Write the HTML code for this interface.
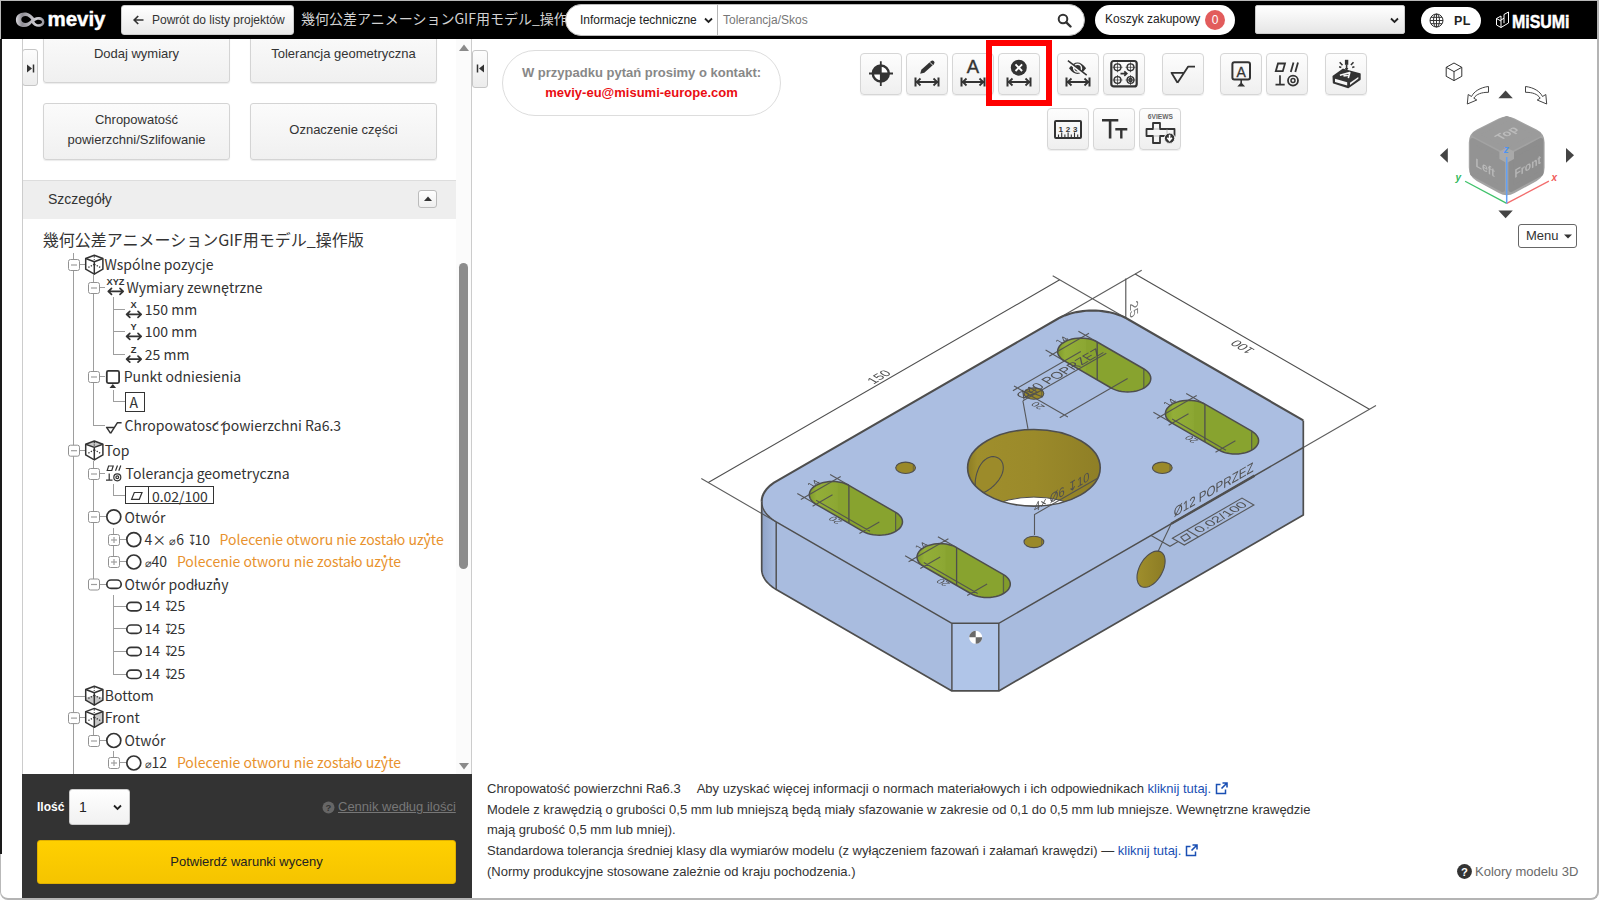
<!DOCTYPE html>
<html lang="pl">
<head>
<meta charset="utf-8">
<title>meviy</title>
<style>
*{box-sizing:border-box;margin:0;padding:0}
html,body{width:1600px;height:900px;overflow:hidden;background:#fff}
body{font-family:"Liberation Sans","Noto Sans CJK JP",sans-serif;font-size:12px;color:#333;position:relative}
.abs{position:absolute}
#frame{position:absolute;left:0;top:0;width:1599px;height:900px;border:1px solid #b9b9b9;border-right:2px solid #b4b4b4;border-bottom:2px solid #b4b4b4;border-radius:0 0 8px 8px;pointer-events:none;z-index:50}
#leftedge{position:absolute;left:0;top:39px;width:2px;height:815px;background:#1a1a1a;z-index:51}
/* header */
#hdr{position:absolute;left:1px;top:1px;width:1596px;height:38px;background:#000}
#logo{position:absolute;left:14px;top:7px;width:95px;height:26px}
#back{position:absolute;left:120px;top:4px;width:173px;height:30px;border:1px solid #ccc;border-radius:3px;background:linear-gradient(#fff,#e9e9e9);color:#333;font-size:12px;line-height:28px;white-space:nowrap}
#ptitle{position:absolute;left:300px;top:5px;width:265px;height:26px;overflow:hidden;white-space:nowrap;color:#d2d2d2;font-size:14px;line-height:25px;font-family:"Noto Sans CJK JP",sans-serif}
#search{position:absolute;left:564px;top:3px;width:520px;height:32px;border-radius:16px;background:#fff;border:1px solid #bbb}
#cart{position:absolute;left:1094px;top:4px;width:140px;height:30px;border-radius:15px;background:#fff;color:#222;font-size:12px;line-height:28px}
#usersel{position:absolute;left:1254px;top:4px;width:150px;height:29px;border-radius:2px;background:linear-gradient(#fff,#e6e6e6);border:1px solid #ccc}
#lang{position:absolute;left:1420px;top:6px;width:60px;height:27px;border-radius:14px;background:#fff}
#misumi{position:absolute;left:1494px;top:8px;width:80px;height:24px}
/* left panel */
#lp{position:absolute;left:22px;top:39px;width:450px;height:859px;border-left:1px solid #ccc;border-right:1px solid #ccc;background:#fff;overflow:hidden}
.gbtn{position:absolute;border:1px solid #d4d4d4;border-radius:3px;background:linear-gradient(#fbfbfb,#f0f0f0);box-shadow:0 1px 1px rgba(0,0,0,.08);color:#333;font-size:13px;text-align:center}
#tree{font-family:"Noto Sans CJK JP",sans-serif;color:#333}
</style>
</head>
<body>
<div id="hdr">
<svg id="logo" viewBox="0 0 95 26">
<defs><linearGradient id="lg1" x1="0" y1="0" x2="1" y2="0"><stop offset="0" stop-color="#d9d8dd"/><stop offset=".22" stop-color="#8e8c94"/><stop offset=".5" stop-color="#b9b8be"/><stop offset=".75" stop-color="#d0cfd4"/><stop offset="1" stop-color="#8f8d95"/></linearGradient></defs>
<g transform="translate(-15,-8)"><path fill-rule="evenodd" fill="url(#lg1)" d="M15.900 20C15.900 15.500 19.500 12.600 24.500 12.600C29 12.600 31.800 15.200 34 18C35.500 17.300 37 17.100 38.500 17.100C42 17.100 44.400 19.200 44.400 22C44.400 24.800 42 26.800 38.500 26.800C35.500 26.800 33.300 25 31.700 23C29.800 25.400 27.500 27 24 27C19.500 27 15.900 24.500 15.900 20ZM21.300 19.500C21.300 21.800 23.300 23 25.500 23C27.800 23 29.700 21.700 31.300 19.800C30 17.800 28 16 25.500 16C23.200 16 21.300 17.300 21.300 19.500ZM34.300 21.400C35.300 23 36.600 24.300 38.600 24.300C40.600 24.300 42 23.400 42 22.100C42 20.700 40.600 19.800 38.600 19.800C37 19.800 35.500 20.500 34.300 21.400Z"/></g>
<text x="32.500" y="17.700" font-family="Liberation Sans, sans-serif" font-weight="bold" font-size="20.500" fill="#fff" stroke="#fff" stroke-width=".45" textLength="58" lengthAdjust="spacingAndGlyphs">meviy</text>
</svg>
<div id="back"><svg style="position:absolute;left:11px;top:9px" width="11" height="10" viewBox="0 0 11 10"><path d="M10.500 5H1.500M5.200 1L1.200 5l4 4" fill="none" stroke="#333" stroke-width="1.700"/></svg><span style="position:absolute;left:30px;top:0">Powrót do listy projektów</span></div>
<div id="ptitle">幾何公差アニメーションGIF用モデル_操作版</div>
<div id="search">
<span style="position:absolute;left:14px;top:0;line-height:30px;font-size:12px;color:#222">Informacje techniczne</span>
<svg style="position:absolute;left:138px;top:12px" width="9" height="7" viewBox="0 0 9 7"><path d="M1 1.500l3.500 3.500L8 1.500" fill="none" stroke="#222" stroke-width="1.800"/></svg>
<div style="position:absolute;left:151px;top:0;width:1px;height:30px;background:#b5b5b5"></div>
<span style="position:absolute;left:157px;top:0;line-height:30px;font-size:12px;color:#777">Tolerancja/Skos</span>
<svg style="position:absolute;left:491px;top:8px" width="15" height="15" viewBox="0 0 15 15"><circle cx="6" cy="6" r="4.300" fill="none" stroke="#333" stroke-width="2"/><path d="M9.300 9.300L13.500 13.500" stroke="#333" stroke-width="2.400" stroke-linecap="round"/></svg>
</div>
<div id="cart"><span style="position:absolute;left:10px;top:0">Koszyk zakupowy</span><span style="position:absolute;left:110px;top:5px;width:20px;height:20px;border-radius:10px;background:#e25c5c;color:#fff;text-align:center;line-height:20px;font-size:12px">0</span></div>
<div id="usersel"><svg style="position:absolute;left:134px;top:11px" width="9" height="7" viewBox="0 0 9 7"><path d="M1 1.500l3.500 3.500L8 1.500" fill="none" stroke="#222" stroke-width="1.800"/></svg></div>
<div id="lang"><svg style="position:absolute;left:8px;top:6px" width="15" height="15" viewBox="0 0 15 15"><g fill="none" stroke="#333" stroke-width="1"><circle cx="7.500" cy="7.500" r="6.500"/><ellipse cx="7.500" cy="7.500" rx="3" ry="6.500"/><path d="M7.500 1v13M1 7.500h13M2 4.300h11M2 10.700h11"/></g></svg><span style="position:absolute;left:33px;top:0;line-height:28px;font-weight:bold;font-size:12.500px;color:#222;letter-spacing:.3px">PL</span></div>
<svg id="misumi" viewBox="0 0 80 24">
<g fill="none" stroke="#fff" stroke-width="1"><path d="M1.500 9.500l4.500-2.500v4l3-1.800V5.500l4.500-2.500v11l-7.500 4.500-4.500-2.500zM6 11v7.500M1.500 9.500L6 12M9 9.200v5"/></g>
<text x="17" y="19" font-family="Liberation Sans, sans-serif" font-weight="bold" font-size="17.500" fill="#fff" stroke="#fff" stroke-width=".5" textLength="57.500" lengthAdjust="spacingAndGlyphs">MiSUMi</text>
</svg>
</div>
<div id="lp">
<div class="abs" style="left:-1px;top:10px;width:16px;height:37px;border:1px solid #c6c6c6;border-radius:3px;background:linear-gradient(#fdfdfd,#ececec)"><svg class="abs" style="left:4px;top:14px" width="8" height="9" viewBox="0 0 8 9"><path d="M0 0.500L5 4.500L0 8.500Z" fill="#333"/><path d="M6.500 0.500V8.500" stroke="#333" stroke-width="1.500"/></svg></div>
<div class="gbtn" style="left:20px;top:-10px;width:187px;height:54px;line-height:47px">Dodaj wymiary</div>
<div class="gbtn" style="left:227px;top:-10px;width:187px;height:54px;line-height:47px">Tolerancja geometryczna</div>
<div class="gbtn" style="left:20px;top:64px;width:187px;height:57px;line-height:20px;padding-top:6px">Chropowatość<br>powierzchni/Szlifowanie</div>
<div class="gbtn" style="left:227px;top:64px;width:187px;height:57px;line-height:52px">Oznaczenie części</div>
<div class="abs" style="left:0;top:141px;width:433px;height:39px;background:#eee;border-top:1px solid #ddd"><span class="abs" style="left:25px;top:0;line-height:37px;font-size:14px;color:#333">Szczegóły</span>
<div class="abs" style="left:395px;top:9px;width:19px;height:18px;border:1px solid #bbb;border-radius:3px;background:linear-gradient(#fff,#eee)"><svg class="abs" style="left:5px;top:5px" width="8" height="5" viewBox="0 0 8 5"><path d="M0 5L4 0.500L8 5Z" fill="#333"/></svg></div></div>
<div class="abs" style="left:433px;top:0;width:15px;height:735px;background:#fbfbfb"></div>
<svg class="abs" style="left:436px;top:5px" width="10" height="7" viewBox="0 0 10 7"><path d="M0 7L5 0.500L10 7Z" fill="#8a8a8a"/></svg>
<svg class="abs" style="left:436px;top:724px" width="10" height="7" viewBox="0 0 10 7"><path d="M0 0L5 6.500L10 0Z" fill="#8a8a8a"/></svg>
<div class="abs" style="left:436px;top:224px;width:9px;height:306px;border-radius:5px;background:#8c8c8c"></div>
</div>
<svg id="tree" class="abs" style="left:23px;top:219px" width="433" height="555" viewBox="23 219 433 555" font-family="Noto Sans CJK JP, sans-serif" font-size="14">
<text x="42.800" y="245.800" font-size="16" fill="#333">幾何公差アニメーションGIF用モデル_操作版</text>
<path d="M73.5 253V774" stroke="#9e9e9e"/>
<path d="M93.5 275V426" stroke="#9e9e9e"/>
<path d="M93.5 461V590" stroke="#9e9e9e"/>
<path d="M93.5 728V746" stroke="#9e9e9e"/>
<path d="M80 264.5H85" stroke="#9e9e9e"/>
<rect x="68.5" y="259.5" width="11" height="11" rx="2" fill="#fff" stroke="#929292"/><path d="M71 265h6" stroke="#9e9e9e" stroke-width="1.2"/>
<g transform="translate(84.7,254.7)" fill="none" stroke="#333" stroke-width="1.5" stroke-linejoin="round"><path d="M9.600 0.600L18.200 3.800V14.500L9.600 19.500L1 14.500V3.800Z"/><path d="M1 3.800L9.600 7L18.200 3.800M9.600 7V19.500"/><path d="M9.600 9.500L2.500 13.300M9.600 9.500L16.700 13.300M9.600 1.500V5" stroke-width="1.300" stroke-dasharray="1.300 1.400"/></g>
<text x="104.4" y="270" fill="#333" >Wspólne pozycje</text>
<rect x="88.5" y="282.5" width="11" height="11" rx="2" fill="#fff" stroke="#929292"/><path d="M91 288h6" stroke="#9e9e9e" stroke-width="1.2"/>
<path d="M100 287.5H105" stroke="#9e9e9e"/>
<text x="106.500" y="285" font-family="Liberation Sans, sans-serif" font-weight="bold" font-size="8.500" fill="#333" textLength="18" lengthAdjust="spacingAndGlyphs">XYZ</text>
<path d="M108.5 291.3H123.0M111.5 288.3L108.3 291.3L111.5 294.3M120.0 288.3L123.2 291.3L120.0 294.3" fill="none" stroke="#333" stroke-width="1.700" stroke-linejoin="round" stroke-linecap="round"/>
<text x="126.5" y="292.6" fill="#333" >Wymiary zewnętrzne</text>
<path d="M113.5 297V354.5" stroke="#9e9e9e"/>
<path d="M113 309.5H125" stroke="#9e9e9e"/>
<text x="133.700" y="308.2" text-anchor="middle" font-family="Liberation Sans, sans-serif" font-weight="bold" font-size="9.300" fill="#333">X</text>
<path d="M126.8 314.3H141.0M129.8 311.3L126.6 314.3L129.8 317.3M138.0 311.3L141.2 314.3L138.0 317.3" fill="none" stroke="#333" stroke-width="1.700" stroke-linejoin="round" stroke-linecap="round"/>
<text x="144.8" y="314.7" fill="#333" >150 mm</text>
<path d="M113 331.5H125" stroke="#9e9e9e"/>
<text x="133.700" y="330.3" text-anchor="middle" font-family="Liberation Sans, sans-serif" font-weight="bold" font-size="9.300" fill="#333">Y</text>
<path d="M126.8 336.40000000000003H141.0M129.8 333.40000000000003L126.6 336.40000000000003L129.8 339.40000000000003M138.0 333.40000000000003L141.2 336.40000000000003L138.0 339.40000000000003" fill="none" stroke="#333" stroke-width="1.700" stroke-linejoin="round" stroke-linecap="round"/>
<text x="144.8" y="336.8" fill="#333" >100 mm</text>
<path d="M113 354.5H125" stroke="#9e9e9e"/>
<text x="133.700" y="353.0" text-anchor="middle" font-family="Liberation Sans, sans-serif" font-weight="bold" font-size="9.300" fill="#333">Z</text>
<path d="M126.8 359.1H141.0M129.8 356.1L126.6 359.1L129.8 362.1M138.0 356.1L141.2 359.1L138.0 362.1" fill="none" stroke="#333" stroke-width="1.700" stroke-linejoin="round" stroke-linecap="round"/>
<text x="144.8" y="359.5" fill="#333" >25 mm</text>
<rect x="88.5" y="371.5" width="11" height="11" rx="2" fill="#fff" stroke="#929292"/><path d="M91 377h6" stroke="#9e9e9e" stroke-width="1.2"/>
<path d="M100 376.5H105" stroke="#9e9e9e"/>
<rect x="106.800" y="370.900" width="12.300" height="12.200" rx="1.500" fill="none" stroke="#333" stroke-width="1.800"/><path d="M109.500 388L112.800 384L116.100 388Z" fill="#333"/>
<text x="123.7" y="381.5" fill="#333" >Punkt odniesienia</text>
<path d="M113.5 390V402" stroke="#9e9e9e"/>
<path d="M113 401.5H125" stroke="#9e9e9e"/>
<rect x="125.500" y="392.500" width="19" height="19" fill="#fff" stroke="#333"/>
<text x="129.5" y="407.7" fill="#333" >A</text>
<path d="M93 425.5H105" stroke="#9e9e9e"/>
<path d="M110.600 433.300L106.600 427.400H114.300M110.600 433.300L117.300 422.800H121.600" fill="none" stroke="#333" stroke-width="1.500" stroke-linejoin="round"/>
<text x="124.6" y="431" fill="#333" >Chropowatość powierzchni Ra6.3</text>
<path d="M80 450.5H85" stroke="#9e9e9e"/>
<rect x="68.5" y="445.2" width="11" height="11" rx="2" fill="#fff" stroke="#929292"/><path d="M71 450.7h6" stroke="#9e9e9e" stroke-width="1.2"/>
<g transform="translate(84.7,440.4)" fill="none" stroke="#333" stroke-width="1.5" stroke-linejoin="round"><path d="M9.600 0.600L18.200 3.800L9.600 7L1 3.800Z" fill="#c8c8c8" stroke="none"/><path d="M9.600 0.600L18.200 3.800V14.500L9.600 19.500L1 14.500V3.800Z"/><path d="M1 3.800L9.600 7L18.200 3.800M9.600 7V19.500"/><path d="M9.600 9.500L2.500 13.300M9.600 9.500L16.700 13.300M9.600 1.500V5" stroke-width="1.300" stroke-dasharray="1.300 1.400"/></g>
<text x="104.8" y="455.7" fill="#333" >Top</text>
<rect x="88.5" y="468.5" width="11" height="11" rx="2" fill="#fff" stroke="#929292"/><path d="M91 474h6" stroke="#9e9e9e" stroke-width="1.2"/>
<path d="M100 473.5H105" stroke="#9e9e9e"/>
<g fill="none" stroke="#333" stroke-width="1.200"><path d="M108.600 466H113.200L111.800 470.500H107.200Z"/><path d="M117.500 465.500L115.500 470.800M120.800 465.500L118.800 470.800"/><path d="M109.200 473.500V480M106 480.200H112.500"/><circle cx="117.300" cy="477.300" r="3.500"/><circle cx="117.300" cy="477.300" r="1.400"/></g>
<text x="125.6" y="479" fill="#333" >Tolerancja geometryczna</text>
<path d="M113.5 484V496" stroke="#9e9e9e"/>
<path d="M113 495.5H125" stroke="#9e9e9e"/>
<rect x="125.500" y="486.500" width="88" height="17" fill="#fff" stroke="#333"/><path d="M148.500 486.500V503.500" stroke="#333"/>
<path d="M134.300 492.500H142L139.300 499.300H131.600Z" fill="none" stroke="#333" stroke-width="1.200"/>
<text x="151.9" y="501.5" fill="#333" >0.02/100</text>
<rect x="88.5" y="511.5" width="11" height="11" rx="2" fill="#fff" stroke="#929292"/><path d="M91 517h6" stroke="#9e9e9e" stroke-width="1.2"/>
<path d="M100 516.5H106" stroke="#9e9e9e"/>
<circle cx="113.8" cy="516.8" r="7" fill="none" stroke="#333" stroke-width="1.700"/>
<text x="124.6" y="522.7" fill="#333" >Otwór</text>
<path d="M113.5 528V561.5" stroke="#9e9e9e"/>
<rect x="108.5" y="534.5" width="11" height="11" rx="2" fill="#fff" stroke="#929292"/><path d="M111 540h6" stroke="#9e9e9e" stroke-width="1.2"/><path d="M114 537v6" stroke="#9e9e9e" stroke-width="1.2"/>
<path d="M120 539.5H126" stroke="#9e9e9e"/>
<circle cx="133.8" cy="539.6" r="7" fill="none" stroke="#333" stroke-width="1.700"/>
<text x="144.400" y="544.7" fill="#333">4× <tspan font-size="10.500">⌀</tspan>6</text>
<text transform="translate(187.8,544.7) scale(.72,1)" fill="#333">↧</text>
<text x="194.5" y="544.7" fill="#333" >10</text>
<text x="219.6" y="544.7" fill="#e8922d" >Polecenie otworu nie zostało użyte</text>
<rect x="108.5" y="556.5" width="11" height="11" rx="2" fill="#fff" stroke="#929292"/><path d="M111 562h6" stroke="#9e9e9e" stroke-width="1.2"/><path d="M114 559v6" stroke="#9e9e9e" stroke-width="1.2"/>
<path d="M120 561.5H126" stroke="#9e9e9e"/>
<circle cx="133.8" cy="562" r="7" fill="none" stroke="#333" stroke-width="1.700"/>
<text x="144.600" y="567.3" fill="#333"><tspan font-size="10.500">⌀</tspan>40</text>
<text x="176.9" y="567.3" fill="#e8922d" >Polecenie otworu nie zostało użyte</text>
<rect x="88.5" y="579.0" width="11" height="11" rx="2" fill="#fff" stroke="#929292"/><path d="M91 584.5h6" stroke="#9e9e9e" stroke-width="1.2"/>
<path d="M100 584.5H106" stroke="#9e9e9e"/>
<rect x="106.8" y="580.0" width="14.400" height="8.400" rx="4.200" fill="none" stroke="#333" stroke-width="1.700"/>
<text x="124.6" y="589.5" fill="#333" >Otwór podłużny</text>
<path d="M113.5 595V674" stroke="#9e9e9e"/>
<path d="M113 606.5H126" stroke="#9e9e9e"/>
<rect x="126.8" y="602.4" width="14.400" height="8.400" rx="4.200" fill="none" stroke="#333" stroke-width="1.700"/>
<text x="144.4" y="611.4" fill="#333" >14</text>
<text transform="translate(164,611.4) scale(.72,1)" fill="#333">↧</text>
<text x="169.7" y="611.4" fill="#333" >25</text>
<path d="M113 628.5H126" stroke="#9e9e9e"/>
<rect x="126.8" y="625.0" width="14.400" height="8.400" rx="4.200" fill="none" stroke="#333" stroke-width="1.700"/>
<text x="144.4" y="634" fill="#333" >14</text>
<text transform="translate(164,634) scale(.72,1)" fill="#333">↧</text>
<text x="169.7" y="634" fill="#333" >25</text>
<path d="M113 651.5H126" stroke="#9e9e9e"/>
<rect x="126.8" y="647.3" width="14.400" height="8.400" rx="4.200" fill="none" stroke="#333" stroke-width="1.700"/>
<text x="144.4" y="656.3" fill="#333" >14</text>
<text transform="translate(164,656.3) scale(.72,1)" fill="#333">↧</text>
<text x="169.7" y="656.3" fill="#333" >25</text>
<path d="M113 674.5H126" stroke="#9e9e9e"/>
<rect x="126.8" y="670.1" width="14.400" height="8.400" rx="4.200" fill="none" stroke="#333" stroke-width="1.700"/>
<text x="144.4" y="679.1" fill="#333" >14</text>
<text transform="translate(164,679.1) scale(.72,1)" fill="#333">↧</text>
<text x="169.7" y="679.1" fill="#333" >25</text>
<path d="M73 696.5H85" stroke="#9e9e9e"/>
<g transform="translate(84.7,685.7)" fill="none" stroke="#333" stroke-width="1.5" stroke-linejoin="round"><path d="M1 12L9.600 9.500L18.200 12L18.200 14.500L9.600 19.500L1 14.500Z" fill="#c8c8c8" stroke="none"/><path d="M9.600 0.600L18.200 3.800V14.500L9.600 19.500L1 14.500V3.800Z"/><path d="M1 3.800L9.600 7L18.200 3.800M9.600 7V19.500"/><path d="M9.600 9.500L2.500 13.300M9.600 9.500L16.700 13.300M9.600 1.500V5" stroke-width="1.300" stroke-dasharray="1.300 1.400"/></g>
<text x="104.8" y="701" fill="#333" >Bottom</text>
<path d="M80 717.5H85" stroke="#9e9e9e"/>
<rect x="68.5" y="712.6" width="11" height="11" rx="2" fill="#fff" stroke="#929292"/><path d="M71 718.1h6" stroke="#9e9e9e" stroke-width="1.2"/>
<g transform="translate(84.7,707.8000000000001)" fill="none" stroke="#333" stroke-width="1.5" stroke-linejoin="round"><path d="M9.600 7L18.200 3.800V14.500L9.600 19.500Z" fill="#c8c8c8" stroke="none"/><path d="M9.600 0.600L18.200 3.800V14.500L9.600 19.500L1 14.500V3.800Z"/><path d="M1 3.800L9.600 7L18.200 3.800M9.600 7V19.500"/><path d="M9.600 9.500L2.500 13.300M9.600 9.500L16.700 13.300M9.600 1.500V5" stroke-width="1.300" stroke-dasharray="1.300 1.400"/></g>
<text x="104.8" y="723.1" fill="#333" >Front</text>
<rect x="88.5" y="735.5" width="11" height="11" rx="2" fill="#fff" stroke="#929292"/><path d="M91 741h6" stroke="#9e9e9e" stroke-width="1.2"/>
<path d="M100 740.5H106" stroke="#9e9e9e"/>
<circle cx="113.8" cy="740.5" r="7" fill="none" stroke="#333" stroke-width="1.700"/>
<text x="124.6" y="745.8" fill="#333" >Otwór</text>
<path d="M113.5 751V758" stroke="#9e9e9e"/>
<rect x="108.5" y="757.5" width="11" height="11" rx="2" fill="#fff" stroke="#929292"/><path d="M111 763h6" stroke="#9e9e9e" stroke-width="1.2"/><path d="M114 760v6" stroke="#9e9e9e" stroke-width="1.2"/>
<path d="M120 762.5H126" stroke="#9e9e9e"/>
<circle cx="133.8" cy="763" r="7" fill="none" stroke="#333" stroke-width="1.700"/>
<text x="144.600" y="768.1" fill="#333"><tspan font-size="10.500">⌀</tspan>12</text>
<text x="176.9" y="768.1" fill="#e8922d" >Polecenie otworu nie zostało użyte</text>
</svg>
<div class="abs" style="left:22px;top:774px;width:450px;height:124px;background:#333"></div>
<span class="abs" style="left:37px;top:799px;font-size:12px;font-weight:bold;color:#fff;line-height:16px">Ilość</span>
<div class="abs" style="left:69px;top:789px;width:61px;height:36px;border-radius:3px;background:linear-gradient(#fff,#f1f1f1);border:1px solid #ccc"><span class="abs" style="left:9px;top:0;line-height:34px;font-size:14px;color:#222">1</span><svg class="abs" style="left:43px;top:14px" width="9" height="7" viewBox="0 0 9 7"><path d="M1 1.500l3.500 3.500L8 1.500" fill="none" stroke="#222" stroke-width="1.800"/></svg></div>
<svg class="abs" style="left:322px;top:801px" width="13" height="13" viewBox="0 0 13 13"><circle cx="6.500" cy="6.500" r="6" fill="#666"/><text x="6.500" y="10" text-anchor="middle" font-family="Liberation Sans, sans-serif" font-weight="bold" font-size="9.500" fill="#333">?</text></svg>
<span class="abs" style="left:338px;top:799px;color:#777;text-decoration:underline;line-height:16px;white-space:nowrap;font-size:13px">Cennik według ilości</span>
<div class="abs" style="left:37px;top:840px;width:419px;height:44px;border-radius:3px;background:linear-gradient(#ffd000,#f5c400);border:1px solid #e0b000;text-align:center;line-height:42px;font-size:13px;color:#222">Potwierdź warunki wyceny</div>
<style>.tb{position:absolute;width:42px;height:42px;border:1px solid #d6d6d6;border-radius:4px;background:linear-gradient(#fdfdfd,#efefef);box-shadow:0 1px 1px rgba(0,0,0,.07)}.tb svg{position:absolute;left:0;top:0}</style>
<div class="tb" style="left:860px;top:53px"><svg width="40" height="40" viewBox="1 1 40 40"><circle cx="20.800" cy="20.500" r="8" fill="#fff" stroke="#333" stroke-width="2.400"/><path d="M20.800 12.500A8 8 0 0 0 12.800 20.500H20.800ZM20.800 28.500A8 8 0 0 0 28.800 20.500H20.800Z" fill="#333"/><path d="M9 20.500H33M20.800 8.300V33" stroke="#333" stroke-width="1.800"/></svg></div>
<div class="tb" style="left:906px;top:53px"><svg width="40" height="40" viewBox="1 1 40 40"><path d="M14.200 20.800L15.300 16.800L24.800 8.200Q26.500 6.800 28 8.300Q29.300 9.800 27.800 11.300L18.300 19.800Z" fill="#333"/><path d="M23.800 9.200L26.900 12.300" stroke="#f6f6f6" stroke-width=".9"/><g fill="none" stroke="#333" stroke-width="2"><path d="M9.500 24.500V33.500M32.500 24.500V33.500M10.500 29H31.500"/><path d="M14.500 25.500L10.800 29L14.500 32.500M27.500 25.500L31.200 29L27.500 32.500" stroke-width="1.800"/></g></svg></div>
<div class="tb" style="left:952px;top:53px"><svg width="40" height="40" viewBox="1 1 40 40"><text x="20.800" y="20.300" text-anchor="middle" font-family="Liberation Sans, sans-serif" font-size="18.500" fill="#333" stroke="#333" stroke-width=".4">A</text><g fill="none" stroke="#333" stroke-width="2"><path d="M9.500 24.500V33.500M32.500 24.500V33.500M10.500 29H31.500"/><path d="M14.500 25.500L10.800 29L14.500 32.500M27.500 25.500L31.200 29L27.500 32.500" stroke-width="1.800"/></g></svg></div>
<div class="tb" style="left:998px;top:53px"><svg width="40" height="40" viewBox="1 1 40 40"><circle cx="20.800" cy="14.700" r="8" fill="#333"/><path d="M17.500 11.400L24.100 18M24.100 11.400L17.500 18" stroke="#fff" stroke-width="1.900"/><g fill="none" stroke="#333" stroke-width="2"><path d="M9.500 24.500V33.500M32.500 24.500V33.500M10.500 29H31.500"/><path d="M14.500 25.500L10.800 29L14.500 32.500M27.500 25.500L31.200 29L27.500 32.500" stroke-width="1.800"/></g></svg></div>
<div class="tb" style="left:1057px;top:53px"><svg width="40" height="40" viewBox="1 1 40 40"><path d="M12 15.200Q20.400 3.800 29.100 15.200Q20.400 26.600 12 15.200Z" fill="#333"/><circle cx="20.600" cy="15.200" r="3.900" fill="none" stroke="#f8f8f8" stroke-width="1.500"/><path d="M11.600 8.900L29 23.400" stroke="#f8f8f8" stroke-width="2.600"/><path d="M10.900 7.600L29.700 22.200" stroke="#333" stroke-width="1.500"/><g fill="none" stroke="#333" stroke-width="2"><path d="M9.500 24.500V33.500M32.500 24.500V33.500M10.500 29H31.500"/><path d="M14.500 25.500L10.800 29L14.500 32.500M27.500 25.500L31.200 29L27.500 32.500" stroke-width="1.800"/></g></svg></div>
<div class="tb" style="left:1103px;top:53px"><svg width="40" height="40" viewBox="1 1 40 40"><g fill="none" stroke="#333" stroke-width="1.400"><rect x="8.300" y="8" width="25.400" height="25.400" rx="2.500" stroke-width="2.200"/><circle cx="14.5" cy="14.3" r="3.4"/><path d="M9.5 14.3H19.5M14.5 9.3V19.3" stroke-width=".7"/><circle cx="27.5" cy="14.3" r="3.4"/><path d="M22.5 14.3H32.5M27.5 9.3V19.3" stroke-width=".7"/><circle cx="14.5" cy="27" r="3.4"/><path d="M9.5 27H19.5M14.5 22.0V32.0" stroke-width=".7"/><circle cx="27.5" cy="27" r="3.4"/><path d="M22.5 27H32.5M27.5 22.0V32.0" stroke-width=".7"/><circle cx="27.500" cy="27" r="1.500"/><path d="M17.500 20.600H23.500M21.300 18.300L23.800 20.600L21.300 22.900" stroke-width="1.600"/></g></svg></div>
<div class="tb" style="left:1162px;top:53px"><svg width="40" height="40" viewBox="1 1 40 40"><path d="M15.500 29.800L9.500 19.800H21.300M15.500 29.800L26.200 13.600H33" fill="none" stroke="#333" stroke-width="1.800" stroke-linejoin="round"/></svg></div>
<div class="tb" style="left:1220px;top:53px"><svg width="40" height="40" viewBox="1 1 40 40"><rect x="12.400" y="9.200" width="17.600" height="17.200" rx="2" fill="none" stroke="#333" stroke-width="2"/><text x="21.200" y="23.800" text-anchor="middle" font-family="Liberation Sans, sans-serif" font-size="14" fill="#333" stroke="#333" stroke-width=".3">A</text><path d="M21.200 26.500V30" stroke="#333" stroke-width="1.600"/><path d="M17.300 33.400L21.200 29.200L25.100 33.400Z" fill="#333"/></svg></div>
<div class="tb" style="left:1266px;top:53px"><svg width="40" height="40" viewBox="1 1 40 40"><g fill="none" stroke="#333" stroke-width="1.800"><path d="M12 10.500H19L16.800 18.200H9.800Z"/><path d="M27.500 9.600L24.800 19M32 9.600L29.300 19"/><path d="M14 22.300V31.500M9.500 31.600H18.700" stroke-width="1.700"/><circle cx="27" cy="27.600" r="5"/><circle cx="27" cy="27.600" r="2" stroke-width="1.500"/></g></svg></div>
<div class="tb" style="left:1325px;top:53px"><svg width="40" height="40" viewBox="1 1 40 40"><path d="M8.300 23.300L18.100 16.400L34.900 21V26.300L23.300 34.400L8.600 29.800Z" fill="#333" stroke="#333" stroke-width="1.600" stroke-linejoin="round"/><path d="M10 25.700L22.200 29.200V32.500L10 29Z" fill="#f6f6f6"/><path d="M25 29.700L33.300 23.900V25.800L25 31.900Z" fill="#f6f6f6"/><path d="M14.900 22.200L24.800 19.600L23.300 25.100M18.500 22.900L24 22.300" fill="none" stroke="#f6f6f6" stroke-width="1.600" stroke-linejoin="round"/><path d="M19.900 6.800H23.300V11.800H19.900Z" fill="#333"/><path d="M21.600 11.500V15.500" stroke="#333" stroke-width="1.600"/><path d="M19.800 15L21.600 18.300L23.400 15Z" fill="#333"/><path d="M14.700 9.200L17.500 12.300M14.100 13.800L16.300 14.500M28.500 9.200L25.900 12.100M29.400 13.800L27.200 14.500" stroke="#333" stroke-width="1.500"/></svg></div>
<div class="tb" style="left:1047px;top:108px"><svg width="40" height="40" viewBox="1 1 40 40"><rect x="8" y="13" width="26" height="17" rx="1" fill="none" stroke="#333" stroke-width="2"/><text x="21" y="23.500" text-anchor="middle" font-family="Liberation Sans, sans-serif" font-size="8" font-weight="bold" fill="#333" textLength="19" lengthAdjust="spacing">123</text><path d="M11.500 29V26.500M14.700 29V24.500M17.900 29V26.500M21.100 29V24.500M24.300 29V26.500M27.500 29V24.500M30.700 29V26.500" stroke="#333" stroke-width="1.100"/></svg></div>
<div class="tb" style="left:1093px;top:108px"><svg width="40" height="40" viewBox="1 1 40 40"><path d="M9 12.300H25.300M17.100 12.300V30.500" stroke="#333" stroke-width="2.600" fill="none"/><path d="M22.300 21.300H34.300M28.300 21.300V30.500" stroke="#333" stroke-width="2.400" fill="none"/></svg></div>
<div class="tb" style="left:1139px;top:108px"><svg width="40" height="40" viewBox="1 1 40 40"><text x="21.300" y="11.200" text-anchor="middle" font-family="Liberation Sans, sans-serif" font-weight="bold" font-size="6.500" fill="#666" textLength="25" lengthAdjust="spacingAndGlyphs">6VIEWS</text><g fill="none" stroke="#333" stroke-width="1.800"><path d="M14 15H21V21H35.500V28H21V35H14V28H7.500V21H14Z" stroke-linejoin="round"/><path d="M14 21H21M14 28H21M28 21V28" stroke-width=".6" stroke="#999"/></g><circle cx="30.600" cy="30.200" r="5.200" fill="#333" stroke="#f4f4f4" stroke-width="1"/><path d="M30.600 26.800V31M28.300 29.800L30.600 32.600L32.900 29.800" fill="none" stroke="#fff" stroke-width="1.600"/></svg></div>
<div class="abs" style="left:986px;top:40px;width:66px;height:66px;border:6px solid #f00"></div>
<div class="abs" style="left:502px;top:50px;width:279px;height:66px;border:1px solid #ddd;border-radius:33px;background:#fff;text-align:center;font-weight:bold;font-size:12px"><div style="margin-top:14px;line-height:16px;color:#888;font-size:13px">W przypadku pytań prosimy o kontakt:</div><div style="margin-top:4px;line-height:16px;color:#ea0c12;font-size:13px">meviy-eu@misumi-europe.com</div></div>
<div class="abs" style="left:472px;top:50px;width:16px;height:38px;border:1px solid #c6c6c6;border-radius:3px;background:linear-gradient(#fdfdfd,#ececec)"><svg class="abs" style="left:3px;top:13px" width="8" height="9" viewBox="0 0 8 9"><path d="M8 0.500L3 4.500L8 8.500Z" fill="#333"/><path d="M1.500 0.500V8.500" stroke="#333" stroke-width="1.500"/></svg></div>
<svg class="abs" style="left:488px;top:160px" width="1110" height="600" viewBox="488 160 1110 600" font-family="Liberation Sans, sans-serif">
<path d="M708.3 482.6L1059.7 279.8M1135.1 274.1L1369.4 409.3M1125.8 278.5V324.5" fill="none" stroke="#4f4f4f" stroke-width="1.100"/>
<defs>
<linearGradient id="gFil" gradientUnits="userSpaceOnUse" x1="761" y1="0" x2="777" y2="0"><stop offset="0" stop-color="#8da1c6"/><stop offset="1" stop-color="#a9bcdf"/></linearGradient>
<linearGradient id="gHole" gradientUnits="userSpaceOnUse" x1="968" y1="0" x2="1100" y2="0"><stop offset="0" stop-color="#8d7d24"/><stop offset=".07" stop-color="#9f8e2c"/><stop offset=".5" stop-color="#9b8a2a"/><stop offset="1" stop-color="#8f7f26"/></linearGradient>
</defs>
<path d="M761.7 501.6L761.8 503.5L762.1 505.3L762.6 507.2L763.4 509.0L764.3 510.8L765.5 512.6L766.8 514.3L768.4 515.9L770.1 517.5L772.0 519.0L774.0 520.5L776.2 521.9L776.2 589.5L774.0 588.1L772.0 586.7L770.1 585.1L768.4 583.5L766.8 581.9L765.5 580.2L764.3 578.4L763.4 576.6L762.6 574.8L762.1 572.9L761.8 571.1L761.7 569.2Z" fill="url(#gFil)"/>
<path d="M776.2 521.9L951.9 623.3L951.9 690.9L776.2 589.5Z" fill="#a9bcdf"/>
<path d="M951.9 623.3L998.8 623.3L998.8 690.9L951.9 690.9Z" fill="#b0c5e8"/>
<path d="M998.8 623.3L1303.3 447.5L1303.3 420.4L1303.3 515.1L998.8 690.9Z" fill="#a8bbde"/>
<path d="M951.9 623.3L998.8 623.3L1303.3 447.5L1303.3 420.4L1127.6 319.0L1127.6 319.0L1125.3 317.7L1122.8 316.5L1120.1 315.4L1117.3 314.4L1114.5 313.5L1111.5 312.8L1108.5 312.1L1105.4 311.6L1102.2 311.1L1099.0 310.8L1095.8 310.6L1092.5 310.6L1089.2 310.6L1086.0 310.8L1082.8 311.1L1079.6 311.6L1076.5 312.1L1073.5 312.8L1070.5 313.5L1067.7 314.4L1064.9 315.4L1062.2 316.5L1059.7 317.7L1057.4 319.0L776.2 481.3L776.2 481.3L774.0 482.7L772.0 484.1L770.1 485.6L768.4 487.2L766.8 488.9L765.5 490.6L764.3 492.4L763.4 494.1L762.6 496.0L762.1 497.8L761.8 499.7L761.7 501.6L761.8 503.5L762.1 505.3L762.6 507.2L763.4 509.0L764.3 510.8L765.5 512.6L766.8 514.3L768.4 515.9L770.1 517.5L772.0 519.0L774.0 520.5L776.2 521.9Z" fill="#abbee1"/>
<clipPath id="cpBig"><ellipse cx="1033.9" cy="467.8" rx="66.3" ry="38.3"/></clipPath>
<ellipse cx="1033.9" cy="467.8" rx="66.3" ry="38.3" fill="url(#gHole)"/>
<g clip-path="url(#cpBig)">
<ellipse cx="1033.9" cy="535.4" rx="66.3" ry="38.3" fill="#fff" stroke="#4e4e4e" stroke-width="1"/>
<path d="M1003.3 467.7L1003.2 466.3L1003.0 464.9L1002.7 463.6L1002.2 462.4L1001.6 461.3L1000.9 460.3L1000.0 459.4L999.1 458.6L998.1 457.9L997.0 457.4L995.8 457.0L994.6 456.7L993.4 456.6L992.1 456.6L990.9 456.8L989.6 457.2L988.3 457.7L987.1 458.3L985.9 459.1L984.7 460.0L983.6 461.0L982.5 462.2L981.5 463.5L980.6 464.8L979.7 466.3L978.9 467.8L978.2 469.4L977.6 471.0L977.0 472.7L976.5 474.4L976.1 476.0L975.8 477.7L975.5 479.3L975.3 480.9L975.2 482.4L975.2 483.9L975.2 485.3L975.3 486.5L975.5 487.7L975.8 488.8L976.1 489.8L976.5 490.6L977.0 491.3L977.6 491.9L978.2 492.4L978.9 492.7L979.7 492.9L980.6 492.9L981.5 492.9L982.5 492.7L983.6 492.4L984.7 492.0L985.9 491.4L987.1 490.8L988.3 490.0L989.6 489.1L990.9 488.2L992.1 487.1L993.4 486.0L994.6 484.8L995.8 483.6L997.0 482.2L998.1 480.9L999.1 479.5L1000.0 478.0L1000.9 476.5L1001.6 475.0L1002.2 473.5L1002.7 472.0L1003.0 470.6L1003.2 469.1Z" fill="#9c8b2a" stroke="#4e4e4e" stroke-width="1.100"/>
</g>
<ellipse cx="1033.9" cy="467.8" rx="66.3" ry="38.3" fill="none" stroke="#4e4e4e" stroke-width="1.600"/>
<ellipse cx="1033.9" cy="541.9" rx="9.9" ry="5.7" fill="#9a8929" stroke="#4e4e4e" stroke-width="1.100"/>
<path d="M1041.7 538.7V545.5" stroke="#4e4e4e" stroke-width=".8" opacity=".8"/>
<ellipse cx="1162.3" cy="467.8" rx="9.9" ry="5.7" fill="#9a8929" stroke="#4e4e4e" stroke-width="1.100"/>
<path d="M1170.0 464.6V471.4" stroke="#4e4e4e" stroke-width=".8" opacity=".8"/>
<ellipse cx="905.6" cy="467.8" rx="9.9" ry="5.7" fill="#9a8929" stroke="#4e4e4e" stroke-width="1.100"/>
<path d="M913.3 464.6V471.4" stroke="#4e4e4e" stroke-width=".8" opacity=".8"/>
<ellipse cx="1033.9" cy="393.6" rx="9.9" ry="5.7" fill="#9a8929" stroke="#4e4e4e" stroke-width="1.100"/>
<path d="M1041.7 390.4V397.2" stroke="#4e4e4e" stroke-width=".8" opacity=".8"/>
<linearGradient id="gSlot" x1="0" y1="0" x2="1" y2="0"><stop offset="0" stop-color="#7f9a2a"/><stop offset=".08" stop-color="#93ae38"/><stop offset=".3" stop-color="#8ca733"/><stop offset=".31" stop-color="#88a32f"/><stop offset="1" stop-color="#88a32f"/></linearGradient>
<clipPath id="cpS0"><path d="M956.6 547.6L954.3 546.4L951.8 545.4L949.1 544.7L946.2 544.1L943.3 543.8L940.2 543.6L937.2 543.8L934.2 544.1L931.4 544.7L928.6 545.4L926.1 546.4L923.8 547.6L921.8 548.9L920.1 550.3L918.8 551.9L917.8 553.6L917.2 555.3L917.0 557.0L917.2 558.8L917.8 560.5L918.8 562.2L920.1 563.7L921.8 565.2L923.8 566.5L970.7 593.5L973.0 594.7L975.5 595.7L978.2 596.4L981.1 597.0L984.1 597.4L987.1 597.5L990.1 597.4L993.1 597.0L996.0 596.4L998.7 595.7L1001.2 594.7L1003.5 593.5L1005.5 592.2L1007.2 590.8L1008.5 589.2L1009.5 587.5L1010.1 585.8L1010.3 584.1L1010.1 582.3L1009.5 580.6L1008.5 579.0L1007.2 577.4L1005.5 575.9L1003.5 574.6Z"/></clipPath>
<path d="M956.6 547.6L954.3 546.4L951.8 545.4L949.1 544.7L946.2 544.1L943.3 543.8L940.2 543.6L937.2 543.8L934.2 544.1L931.4 544.7L928.6 545.4L926.1 546.4L923.8 547.6L921.8 548.9L920.1 550.3L918.8 551.9L917.8 553.6L917.2 555.3L917.0 557.0L917.2 558.8L917.8 560.5L918.8 562.2L920.1 563.7L921.8 565.2L923.8 566.5L970.7 593.5L973.0 594.7L975.5 595.7L978.2 596.4L981.1 597.0L984.1 597.4L987.1 597.5L990.1 597.4L993.1 597.0L996.0 596.4L998.7 595.7L1001.2 594.7L1003.5 593.5L1005.5 592.2L1007.2 590.8L1008.5 589.2L1009.5 587.5L1010.1 585.8L1010.3 584.1L1010.1 582.3L1009.5 580.6L1008.5 579.0L1007.2 577.4L1005.5 575.9L1003.5 574.6Z" fill="url(#gSlot)"/>
<g clip-path="url(#cpS0)"><path d="M956.6 547.6v60M1003.5 574.6v40" stroke="#4e4e4e" stroke-width="1.300"/><path d="M1003.5 574.6h30v40h-30Z" fill="#7d972a" opacity=".55"/></g>
<path d="M956.6 547.6L954.3 546.4L951.8 545.4L949.1 544.7L946.2 544.1L943.3 543.8L940.2 543.6L937.2 543.8L934.2 544.1L931.4 544.7L928.6 545.4L926.1 546.4L923.8 547.6L921.8 548.9L920.1 550.3L918.8 551.9L917.8 553.6L917.2 555.3L917.0 557.0L917.2 558.8L917.8 560.5L918.8 562.2L920.1 563.7L921.8 565.2L923.8 566.5L970.7 593.5L973.0 594.7L975.5 595.7L978.2 596.4L981.1 597.0L984.1 597.4L987.1 597.5L990.1 597.4L993.1 597.0L996.0 596.4L998.7 595.7L1001.2 594.7L1003.5 593.5L1005.5 592.2L1007.2 590.8L1008.5 589.2L1009.5 587.5L1010.1 585.8L1010.3 584.1L1010.1 582.3L1009.5 580.6L1008.5 579.0L1007.2 577.4L1005.5 575.9L1003.5 574.6Z" fill="none" stroke="#4e4e4e" stroke-width="1.500"/>
<clipPath id="cpS1"><path d="M848.9 485.3L846.6 484.2L844.1 483.2L841.3 482.4L838.5 481.9L835.5 481.5L832.5 481.4L829.4 481.5L826.5 481.9L823.6 482.4L820.9 483.2L818.4 484.2L816.1 485.3L814.1 486.7L812.4 488.1L811.0 489.7L810.1 491.3L809.5 493.1L809.3 494.8L809.5 496.6L810.1 498.3L811.0 499.9L812.4 501.5L814.1 503.0L816.1 504.3L862.9 531.3L865.2 532.5L867.7 533.5L870.4 534.2L873.3 534.8L876.3 535.1L879.3 535.3L882.4 535.1L885.3 534.8L888.2 534.2L890.9 533.5L893.4 532.5L895.7 531.3L897.7 530.0L899.4 528.6L900.7 527.0L901.7 525.3L902.3 523.6L902.5 521.9L902.3 520.1L901.7 518.4L900.7 516.7L899.4 515.2L897.7 513.7L895.7 512.4Z"/></clipPath>
<path d="M848.9 485.3L846.6 484.2L844.1 483.2L841.3 482.4L838.5 481.9L835.5 481.5L832.5 481.4L829.4 481.5L826.5 481.9L823.6 482.4L820.9 483.2L818.4 484.2L816.1 485.3L814.1 486.7L812.4 488.1L811.0 489.7L810.1 491.3L809.5 493.1L809.3 494.8L809.5 496.6L810.1 498.3L811.0 499.9L812.4 501.5L814.1 503.0L816.1 504.3L862.9 531.3L865.2 532.5L867.7 533.5L870.4 534.2L873.3 534.8L876.3 535.1L879.3 535.3L882.4 535.1L885.3 534.8L888.2 534.2L890.9 533.5L893.4 532.5L895.7 531.3L897.7 530.0L899.4 528.6L900.7 527.0L901.7 525.3L902.3 523.6L902.5 521.9L902.3 520.1L901.7 518.4L900.7 516.7L899.4 515.2L897.7 513.7L895.7 512.4Z" fill="url(#gSlot)"/>
<g clip-path="url(#cpS1)"><path d="M848.9 485.3v60M895.7 512.4v40" stroke="#4e4e4e" stroke-width="1.300"/><path d="M895.7 512.4h30v40h-30Z" fill="#7d972a" opacity=".55"/></g>
<path d="M848.9 485.3L846.6 484.2L844.1 483.2L841.3 482.4L838.5 481.9L835.5 481.5L832.5 481.4L829.4 481.5L826.5 481.9L823.6 482.4L820.9 483.2L818.4 484.2L816.1 485.3L814.1 486.7L812.4 488.1L811.0 489.7L810.1 491.3L809.5 493.1L809.3 494.8L809.5 496.6L810.1 498.3L811.0 499.9L812.4 501.5L814.1 503.0L816.1 504.3L862.9 531.3L865.2 532.5L867.7 533.5L870.4 534.2L873.3 534.8L876.3 535.1L879.3 535.3L882.4 535.1L885.3 534.8L888.2 534.2L890.9 533.5L893.4 532.5L895.7 531.3L897.7 530.0L899.4 528.6L900.7 527.0L901.7 525.3L902.3 523.6L902.5 521.9L902.3 520.1L901.7 518.4L900.7 516.7L899.4 515.2L897.7 513.7L895.7 512.4Z" fill="none" stroke="#4e4e4e" stroke-width="1.500"/>
<clipPath id="cpS2"><path d="M1204.9 404.2L1202.7 403.0L1200.1 402.1L1197.4 401.3L1194.5 400.7L1191.6 400.4L1188.5 400.3L1185.5 400.4L1182.5 400.7L1179.7 401.3L1177.0 402.1L1174.4 403.0L1172.1 404.2L1170.1 405.5L1168.5 407.0L1167.1 408.5L1166.1 410.2L1165.6 411.9L1165.4 413.7L1165.6 415.4L1166.1 417.1L1167.1 418.8L1168.5 420.4L1170.1 421.8L1172.1 423.1L1219.0 450.2L1221.3 451.3L1223.8 452.3L1226.5 453.1L1229.4 453.6L1232.4 454.0L1235.4 454.1L1238.4 454.0L1241.4 453.6L1244.3 453.1L1247.0 452.3L1249.5 451.3L1251.8 450.2L1253.8 448.9L1255.5 447.4L1256.8 445.8L1257.8 444.2L1258.4 442.5L1258.6 440.7L1258.4 439.0L1257.8 437.2L1256.8 435.6L1255.5 434.0L1253.8 432.6L1251.8 431.2Z"/></clipPath>
<path d="M1204.9 404.2L1202.7 403.0L1200.1 402.1L1197.4 401.3L1194.5 400.7L1191.6 400.4L1188.5 400.3L1185.5 400.4L1182.5 400.7L1179.7 401.3L1177.0 402.1L1174.4 403.0L1172.1 404.2L1170.1 405.5L1168.5 407.0L1167.1 408.5L1166.1 410.2L1165.6 411.9L1165.4 413.7L1165.6 415.4L1166.1 417.1L1167.1 418.8L1168.5 420.4L1170.1 421.8L1172.1 423.1L1219.0 450.2L1221.3 451.3L1223.8 452.3L1226.5 453.1L1229.4 453.6L1232.4 454.0L1235.4 454.1L1238.4 454.0L1241.4 453.6L1244.3 453.1L1247.0 452.3L1249.5 451.3L1251.8 450.2L1253.8 448.9L1255.5 447.4L1256.8 445.8L1257.8 444.2L1258.4 442.5L1258.6 440.7L1258.4 439.0L1257.8 437.2L1256.8 435.6L1255.5 434.0L1253.8 432.6L1251.8 431.2Z" fill="url(#gSlot)"/>
<g clip-path="url(#cpS2)"><path d="M1204.9 404.2v60M1251.8 431.2v40" stroke="#4e4e4e" stroke-width="1.300"/><path d="M1251.8 431.2h30v40h-30Z" fill="#7d972a" opacity=".55"/></g>
<path d="M1204.9 404.2L1202.7 403.0L1200.1 402.1L1197.4 401.3L1194.5 400.7L1191.6 400.4L1188.5 400.3L1185.5 400.4L1182.5 400.7L1179.7 401.3L1177.0 402.1L1174.4 403.0L1172.1 404.2L1170.1 405.5L1168.5 407.0L1167.1 408.5L1166.1 410.2L1165.6 411.9L1165.4 413.7L1165.6 415.4L1166.1 417.1L1167.1 418.8L1168.5 420.4L1170.1 421.8L1172.1 423.1L1219.0 450.2L1221.3 451.3L1223.8 452.3L1226.5 453.1L1229.4 453.6L1232.4 454.0L1235.4 454.1L1238.4 454.0L1241.4 453.6L1244.3 453.1L1247.0 452.3L1249.5 451.3L1251.8 450.2L1253.8 448.9L1255.5 447.4L1256.8 445.8L1257.8 444.2L1258.4 442.5L1258.6 440.7L1258.4 439.0L1257.8 437.2L1256.8 435.6L1255.5 434.0L1253.8 432.6L1251.8 431.2Z" fill="none" stroke="#4e4e4e" stroke-width="1.500"/>
<clipPath id="cpS3"><path d="M1097.2 342.0L1094.9 340.8L1092.4 339.9L1089.7 339.1L1086.8 338.5L1083.8 338.2L1080.8 338.1L1077.8 338.2L1074.8 338.5L1071.9 339.1L1069.2 339.9L1066.7 340.8L1064.4 342.0L1062.4 343.3L1060.7 344.8L1059.4 346.3L1058.4 348.0L1057.8 349.7L1057.6 351.4L1057.8 353.2L1058.4 354.9L1059.4 356.6L1060.7 358.1L1062.4 359.6L1064.4 360.9L1111.2 388.0L1113.5 389.1L1116.0 390.1L1118.8 390.9L1121.6 391.4L1124.6 391.8L1127.6 391.9L1130.7 391.8L1133.6 391.4L1136.5 390.9L1139.2 390.1L1141.8 389.1L1144.0 388.0L1146.0 386.6L1147.7 385.2L1149.1 383.6L1150.0 382.0L1150.6 380.2L1150.8 378.5L1150.6 376.7L1150.0 375.0L1149.1 373.4L1147.7 371.8L1146.0 370.3L1144.0 369.0Z"/></clipPath>
<path d="M1097.2 342.0L1094.9 340.8L1092.4 339.9L1089.7 339.1L1086.8 338.5L1083.8 338.2L1080.8 338.1L1077.8 338.2L1074.8 338.5L1071.9 339.1L1069.2 339.9L1066.7 340.8L1064.4 342.0L1062.4 343.3L1060.7 344.8L1059.4 346.3L1058.4 348.0L1057.8 349.7L1057.6 351.4L1057.8 353.2L1058.4 354.9L1059.4 356.6L1060.7 358.1L1062.4 359.6L1064.4 360.9L1111.2 388.0L1113.5 389.1L1116.0 390.1L1118.8 390.9L1121.6 391.4L1124.6 391.8L1127.6 391.9L1130.7 391.8L1133.6 391.4L1136.5 390.9L1139.2 390.1L1141.8 389.1L1144.0 388.0L1146.0 386.6L1147.7 385.2L1149.1 383.6L1150.0 382.0L1150.6 380.2L1150.8 378.5L1150.6 376.7L1150.0 375.0L1149.1 373.4L1147.7 371.8L1146.0 370.3L1144.0 369.0Z" fill="url(#gSlot)"/>
<g clip-path="url(#cpS3)"><path d="M1097.2 342.0v60M1144.0 369.0v40" stroke="#4e4e4e" stroke-width="1.300"/><path d="M1144.0 369.0h30v40h-30Z" fill="#7d972a" opacity=".55"/></g>
<path d="M1097.2 342.0L1094.9 340.8L1092.4 339.9L1089.7 339.1L1086.8 338.5L1083.8 338.2L1080.8 338.1L1077.8 338.2L1074.8 338.5L1071.9 339.1L1069.2 339.9L1066.7 340.8L1064.4 342.0L1062.4 343.3L1060.7 344.8L1059.4 346.3L1058.4 348.0L1057.8 349.7L1057.6 351.4L1057.8 353.2L1058.4 354.9L1059.4 356.6L1060.7 358.1L1062.4 359.6L1064.4 360.9L1111.2 388.0L1113.5 389.1L1116.0 390.1L1118.8 390.9L1121.6 391.4L1124.6 391.8L1127.6 391.9L1130.7 391.8L1133.6 391.4L1136.5 390.9L1139.2 390.1L1141.8 389.1L1144.0 388.0L1146.0 386.6L1147.7 385.2L1149.1 383.6L1150.0 382.0L1150.6 380.2L1150.8 378.5L1150.6 376.7L1150.0 375.0L1149.1 373.4L1147.7 371.8L1146.0 370.3L1144.0 369.0Z" fill="none" stroke="#4e4e4e" stroke-width="1.500"/>
<linearGradient id="gFH" x1="0" y1="0" x2="1" y2="0"><stop offset="0" stop-color="#9f8e2c"/><stop offset="1" stop-color="#8c7c24"/></linearGradient>
<path d="M1165.1 561.1L1165.0 559.0L1164.6 557.2L1164.1 555.5L1163.2 554.1L1162.2 552.9L1161.0 552.0L1159.6 551.4L1158.1 551.1L1156.4 551.1L1154.7 551.4L1152.9 552.0L1151.1 553.0L1149.2 554.2L1147.4 555.6L1145.7 557.3L1144.0 559.2L1142.5 561.3L1141.1 563.5L1139.9 565.8L1138.9 568.1L1138.1 570.5L1137.5 572.8L1137.1 575.1L1137.0 577.3L1137.1 579.4L1137.5 581.2L1138.1 582.9L1138.9 584.3L1139.9 585.5L1141.1 586.4L1142.5 587.0L1144.0 587.3L1145.7 587.3L1147.4 587.0L1149.2 586.4L1151.1 585.4L1152.9 584.2L1154.7 582.8L1156.4 581.1L1158.1 579.2L1159.6 577.1L1161.0 574.9L1162.2 572.6L1163.2 570.3L1164.1 567.9L1164.6 565.6L1165.0 563.3Z" fill="url(#gFH)" stroke="#4e4e4e" stroke-width="1.100"/>
<path d="M951.9 623.3L776.2 521.9L776.2 521.9L774.0 520.5L772.0 519.0L770.1 517.5L768.4 515.9L766.8 514.3L765.5 512.6L764.3 510.8L763.4 509.0L762.6 507.2L762.1 505.3L761.8 503.5L761.7 501.6M776.2 521.9L776.2 589.5M951.9 623.3L951.9 690.9M998.8 623.3L998.8 690.9M951.9 623.3L998.8 623.3L1303.3 447.5" fill="none" stroke="#4e4e4e" stroke-width="1.450"/>
<path d="M761.7 501.6L761.7 569.2L761.8 571.1L762.1 572.9L762.6 574.8L763.4 576.6L764.3 578.4L765.5 580.2L766.8 581.9L768.4 583.5L770.1 585.1L772.0 586.7L774.0 588.1L776.2 589.5L951.9 690.9L998.8 690.9L1303.3 515.1L1303.3 420.4" fill="none" stroke="#4e4e4e" stroke-width="1.700" stroke-linejoin="round"/>
<path d="M1303.3 420.4L1127.6 319.0L1127.6 319.0L1125.3 317.7L1122.8 316.5L1120.1 315.4L1117.3 314.4L1114.5 313.5L1111.5 312.8L1108.5 312.1L1105.4 311.6L1102.2 311.1L1099.0 310.8L1095.8 310.6L1092.5 310.6L1089.2 310.6L1086.0 310.8L1082.8 311.1L1079.6 311.6L1076.5 312.1L1073.5 312.8L1070.5 313.5L1067.7 314.4L1064.9 315.4L1062.2 316.5L1059.7 317.7L1057.4 319.0L776.2 481.3L776.2 481.3L774.0 482.7L772.0 484.1L770.1 485.6L768.4 487.2L766.8 488.9L765.5 490.6L764.3 492.4L763.4 494.1L762.6 496.0L762.1 497.8L761.8 499.7L761.7 501.6" fill="none" stroke="#4e4e4e" stroke-width="2.100" stroke-linejoin="round"/>
<circle cx="975.7" cy="637.3" r="6.500" fill="#fff"/><path d="M975.7 637.3V630.8A6.500 6.500 0 0 0 969.2 637.3ZM975.7 637.3V643.8A6.500 6.500 0 0 0 982.2 637.3Z" fill="#6a6a6a"/>
<path d="M776.2 521.9L701.3 478.6M1127.6 319.0L1052.7 275.7M1057.4 319.0L1141.7 270.3M1303.3 447.5L1376.0 405.5M923.8 566.5L905.1 555.7M956.6 547.6L937.9 536.7M908.6 561.8L948.4 538.8M940.2 557.0L920.3 568.5M987.1 584.1L967.2 595.6M923.8 562.4L977.7 593.5M816.1 504.3L797.3 493.5M848.9 485.3L830.1 474.5M800.8 499.5L840.7 476.6M832.5 494.8L812.6 506.3M879.3 521.9L859.4 533.4M816.1 500.2L870.0 531.3M1172.1 423.1L1153.4 412.3M1204.9 404.2L1186.2 393.4M1156.9 418.4L1196.7 395.4M1188.5 413.7L1168.6 425.2M1235.4 440.7L1215.5 452.2M1172.1 419.1L1226.0 450.2M1064.4 360.9L1045.6 350.1M1097.2 342.0L1078.4 331.2M1049.2 356.2L1089.0 333.2M1080.8 351.4L1012.9 390.7M1127.6 378.5L1059.7 417.7M1014.0 385.9L1067.9 417.0M1022.9 400.8L1106.3 353.2M1022.9 400.8L1028.0 428.8M1024.9 390.1L1042.9 397.1M1024.9 397.1L1042.9 390.1M1034.5 535.0L1034.5 514.5L1098.0 478.0M1171.2 523.8L1158.0 551.5M1172.4 538.2L1242.0 498.1L1253.9 505.0L1184.3 545.1ZM1186.7 530.0L1198.6 536.9M1178.2 541.6L1170.0 546.3L1151.1 535.4M1184.6 541.2L1190.4 537.8L1186.7 533.8L1180.8 537.1Z" fill="none" stroke="#4f4f4f" stroke-width="1.100" opacity=".92"/><path d="M1171.2 523.8L1254.6 475.6" stroke="#4f4f4f" stroke-width="2.400"/>
<g style="filter:grayscale(1)"><text transform="matrix(0.8660254,-0.5,0.8660254,0.5,873.4,384.4)" font-size="12.8" fill="#4f4f4f" >150</text>
<text transform="matrix(-0.8660254,-0.5,0.8660254,-0.5,1255.6,350.0)" font-size="12.8" fill="#4f4f4f" >100</text>
<text transform="matrix(0,1,-0.8660254,0.5,1129.500,304)" font-size="13.500" fill="#777">25</text>
<text transform="matrix(0.8660254,-0.5,0.8660254,0.5,919.7,550.4)" font-size="9.8" fill="#4f4f4f" >14</text>
<text transform="matrix(-0.8660254,-0.5,0.8660254,-0.5,950.8,583.6)" font-size="9.8" fill="#4f4f4f" >20</text>
<text transform="matrix(0.8660254,-0.5,0.8660254,0.5,811.9,488.1)" font-size="9.8" fill="#4f4f4f" >14</text>
<text transform="matrix(-0.8660254,-0.5,0.8660254,-0.5,843.0,521.3)" font-size="9.8" fill="#4f4f4f" >20</text>
<text transform="matrix(0.8660254,-0.5,0.8660254,0.5,1168.0,407.0)" font-size="9.8" fill="#4f4f4f" >14</text>
<text transform="matrix(-0.8660254,-0.5,0.8660254,-0.5,1199.1,440.2)" font-size="9.8" fill="#4f4f4f" >20</text>
<text transform="matrix(0.8660254,-0.5,0.8660254,0.5,1060.2,344.8)" font-size="9.8" fill="#4f4f4f" >14</text>
<text transform="matrix(-0.8660254,-0.5,0.8660254,-0.5,1045.5,406.7)" font-size="9.8" fill="#4f4f4f" >20</text>
<text transform="matrix(0.8660254,-0.5,0.8660254,0.5,1022.7,399.6)" font-size="13.5" fill="#4f4f4f" textLength="94" lengthAdjust="spacingAndGlyphs">Ø40 POPRZEZ</text>
<text transform="matrix(0.8660254,-0.5,0,1,1034.0,512.5)" font-size="13" fill="#4f4f4f" textLength="64" lengthAdjust="spacingAndGlyphs">4× Ø6 ↧10</text>
<text transform="matrix(0.8660254,-0.5,0,1,1173.8,517.2)" font-size="13.5" fill="#4f4f4f" textLength="92" lengthAdjust="spacingAndGlyphs" font-style="normal">Ø12 POPRZEZ</text>
<text transform="matrix(0.8660254,-0.5,0.8660254,0.5,1199.8,533.2)" font-size="12" fill="#4f4f4f" textLength="56" lengthAdjust="spacingAndGlyphs">0.02/100</text></g>
</svg>
<svg class="abs" style="left:1444px;top:61px" width="20" height="22" viewBox="1444 61 20 22"><g fill="none" stroke="#333" stroke-width="1" stroke-linejoin="round"><path d="M1454 63L1461.800 67.300V76.300L1454 80.600L1446.200 76.300V67.300Z"/><path d="M1446.200 67.300L1454 71.600L1461.800 67.300M1454 71.600V80.600"/></g></svg>
<svg class="abs" style="left:1436px;top:84px" width="144" height="138" viewBox="1436 84 144 138" font-family="Liberation Sans, sans-serif"><defs><linearGradient id="nT" x1="0" y1="0" x2="0" y2="1"><stop offset="0" stop-color="#9d9d9d"/><stop offset="1" stop-color="#969696"/></linearGradient></defs><path d="M1498.400 98.300L1505.600 90.500L1512.800 98.300Z" fill="#444"/><path d="M1498.400 210.500L1505.600 218.300L1512.800 210.500Z" fill="#444"/><path d="M1447.800 147.900L1440 155.300L1447.800 162.800Z" fill="#444"/><path d="M1566 147.900L1574 155.300L1566 162.800Z" fill="#444"/><path d="M1488.500 86.500C1480 87.500 1474 91.500 1471.500 96.500L1468.200 94.500L1467.300 104L1476.800 100L1473.800 98.200C1476.500 94 1481.500 92.300 1488.500 92.300Z" fill="#fff" stroke="#444" stroke-width="1" stroke-linejoin="round"/><path d="M1525.500 86.500C1534 87.500 1540 91.500 1542.500 96.500L1545.800 94.500L1546.700 104L1537.200 100L1540.200 98.200C1537.500 94 1532.500 92.300 1525.500 92.300Z" fill="#fff" stroke="#444" stroke-width="1" stroke-linejoin="round"/><path d="M1498.7 118.5Q1506.7 114.5 1514.7 118.5L1536.6 129.5Q1544.6 133.5 1544.6 142.5L1544.6 167.5Q1544.6 176.5 1536.7 180.9L1514.6 193.1Q1506.7 197.5 1498.8 193.1L1476.7 180.9Q1468.8 176.5 1468.8 167.5L1468.8 142.5Q1468.8 133.5 1476.8 129.5Z" fill="#a3a3a3"/><path d="M1506.700 118.500L1538.500 134.500L1506.700 151L1474.900 134.500Z" fill="#9b9b9b" stroke="#9b9b9b" stroke-width="5" stroke-linejoin="round"/><path d="M1472.500 140.500L1502.500 156.500V189.500L1472.500 173.500Z" fill="#939393" stroke="#939393" stroke-width="5" stroke-linejoin="round"/><path d="M1540.900 140.500L1510.900 156.500V189.500L1540.900 173.500Z" fill="#8d8d8d" stroke="#8d8d8d" stroke-width="5" stroke-linejoin="round"/><path d="M1506.700 147.500L1514 151.500V159L1506.700 163L1499.400 159V151.500Z" fill="#a9a9a9"/><text transform="matrix(0.8660254,-0.5,0.8660254,0.5,1501,140.500)" font-size="12" font-weight="bold" fill="#bcbcbc" style="filter:grayscale(1)">Top</text><text transform="matrix(0.8660254,0.5,0,1,1475.600,166.200)" font-size="12" font-weight="bold" fill="#b9b9b9" style="filter:grayscale(1)">Left</text><text transform="matrix(0.8660254,-0.5,0,1,1514.400,178.300)" font-size="12" font-weight="bold" fill="#b6b6b6" style="filter:grayscale(1)">Front</text><path d="M1506.700 203.400L1465.100 181.200" stroke="#3fc26a" stroke-width="1.300"/><path d="M1506.700 203.400L1548.900 181.200" stroke="#f26d6d" stroke-width="1.300"/><path d="M1506.700 203.400V157" stroke="#62a0f5" stroke-width="1.500"/><text x="1503.800" y="152.500" font-size="10" font-weight="bold" font-style="italic" fill="#4f93f0">z</text><text x="1551.500" y="180.500" font-size="10" font-weight="bold" font-style="italic" fill="#f05a5a">x</text><text x="1455.500" y="180.500" font-size="10" font-weight="bold" font-style="italic" fill="#2fb85c">y</text></svg>
<div class="abs" style="left:1518px;top:224px;width:59px;height:24px;border:1px solid #666;border-radius:3px;background:#fff"><span class="abs" style="left:7px;top:0;line-height:22px;font-size:13px;color:#333">Menu</span><svg class="abs" style="left:45px;top:9px" width="8" height="5" viewBox="0 0 8 5"><path d="M0 0.500H8L4 4.500Z" fill="#333"/></svg></div>
<div class="abs" style="left:487px;top:779px;width:860px;font-size:13px;line-height:20.700px;color:#333;white-space:nowrap"><div>Chropowatość powierzchni Ra6.3<span style="display:inline-block;width:16px"></span>Aby uzyskać więcej informacji o normach materiałowych i ich odpowiednikach <span style="color:#1a4fb4">kliknij tutaj.</span><svg style="display:inline-block;vertical-align:-2px;margin-left:4px" width="13" height="13" viewBox="0 0 13 13"><path d="M10.500 7.500V11.500H1.500V2.500H5.500" fill="none" stroke="#1a4fb4" stroke-width="1.500"/><path d="M7.500 1H12V5.500M12 1L6.500 6.500" fill="none" stroke="#1a4fb4" stroke-width="1.600"/></svg></div><div>Modele z krawędzią o grubości 0,5 mm lub mniejszą będą miały sfazowanie w zakresie od 0,1 do 0,5 mm lub mniejsze. Wewnętrzne krawędzie</div><div>mają grubość 0,5 mm lub mniej).</div><div>Standardowa tolerancja średniej klasy dla wymiarów modelu (z wyłączeniem fazowań i załamań krawędzi) — <span style="color:#1a4fb4">kliknij tutaj.</span><svg style="display:inline-block;vertical-align:-2px;margin-left:4px" width="13" height="13" viewBox="0 0 13 13"><path d="M10.500 7.500V11.500H1.500V2.500H5.500" fill="none" stroke="#1a4fb4" stroke-width="1.500"/><path d="M7.500 1H12V5.500M12 1L6.500 6.500" fill="none" stroke="#1a4fb4" stroke-width="1.600"/></svg></div><div>(Normy produkcyjne stosowane zależnie od kraju pochodzenia.)</div></div>
<svg class="abs" style="left:1457px;top:864px" width="15" height="15" viewBox="0 0 14 14"><circle cx="7" cy="7" r="6.900" fill="#333"/><text x="7" y="10.800" text-anchor="middle" font-family="Liberation Sans, sans-serif" font-weight="bold" font-size="10.500" fill="#fff">?</text></svg>
<span class="abs" style="left:1475px;top:864px;font-size:13px;line-height:16px;color:#6a6a6a;white-space:nowrap">Kolory modelu 3D</span>
<div id="leftedge"></div>
<div id="frame"></div>
</body>
</html>
